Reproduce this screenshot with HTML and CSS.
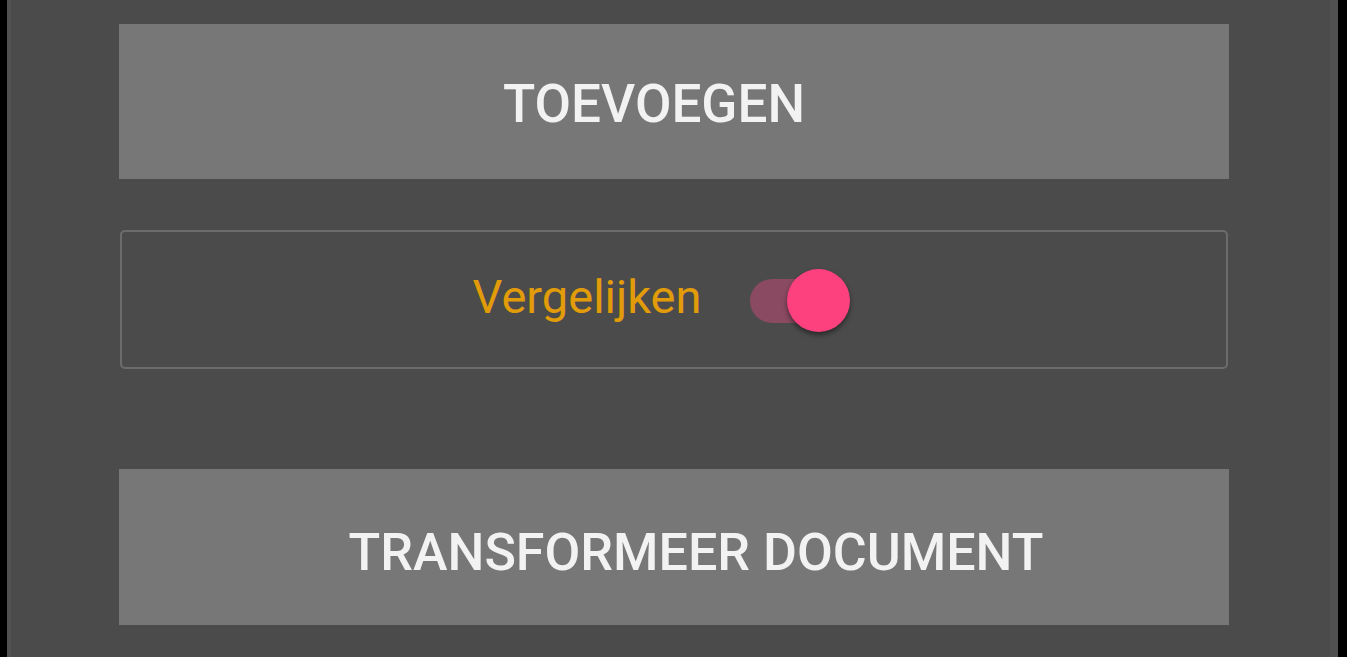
FILE: index.html
```html
<!DOCTYPE html>
<html>
<head>
<meta charset="utf-8">
<link rel="stylesheet" href="styles.css">
</head>
<body>
<div class="frame">
  <div class="panel">
    <button class="btn btn-add">TOEVOEGEN</button>
    <div class="compare">
      <span class="compare-label">Vergelijken</span>
      <span class="toggle"><span class="track"></span><span class="thumb"></span></span>
    </div>
    <button class="btn btn-transform">TRANSFORMEER DOCUMENT</button>
  </div>
</div>
</body>
</html>
```
FILE: styles.css
```css
html, body {
  margin: 0;
  padding: 0;
  background: #4b4b4b;
  height: 100%;
  overflow: hidden;
}
.frame {
  height: 657px;
  border-left: 7px solid #000;
  border-right: 9px solid #000;
  box-sizing: border-box;
}
.panel {
  height: 100%;
  box-sizing: border-box;
  border-left: 4px solid #515151;
  border-right: 8px solid #505050;
  background: #4b4b4b;
  padding: 24px 101px 0 108px;
  display: flex;
  flex-direction: column;
}
.btn {
  display: flex;
  align-items: center;
  justify-content: center;
  border: none;
  margin: 0;
  background: #777777;
  color: #f2f2f2;
  font-family: Roboto, "Liberation Sans", sans-serif;
  font-weight: 500;
  font-size: 53px;
  width: 100%;
  box-sizing: border-box;
  cursor: pointer;
}
.btn-add {
  height: 155px;
  padding: 4px 40px 0 0;
}
.btn-transform {
  height: 156px;
  padding: 10px 0 0 44px;
  font-size: 52px;
}
.compare {
  margin: 51px 1px 100px;
  height: 139px;
  box-sizing: border-box;
  border: 2px solid #6c6c6c;
  border-radius: 5px;
  display: flex;
  align-items: center;
  justify-content: center;
  gap: 48px;
  padding-right: 24px;
}
.compare-label {
  font-family: Roboto, "Liberation Sans", sans-serif;
  font-weight: 400;
  font-size: 47px;
  color: #e29c0a;
  padding-bottom: 6px;
}
.toggle {
  position: relative;
  width: 102px;
  height: 64px;
  display: block;
}
.track {
  position: absolute;
  left: 0;
  top: 11px;
  width: 86px;
  height: 44px;
  border-radius: 22px;
  background: #8a4a62;
}
.thumb {
  position: absolute;
  left: 37px;
  top: 1px;
  width: 63px;
  height: 63px;
  border-radius: 50%;
  background: #fd417f;
  box-shadow: 0 3px 5px rgba(0, 0, 0, 0.45);
}
```
